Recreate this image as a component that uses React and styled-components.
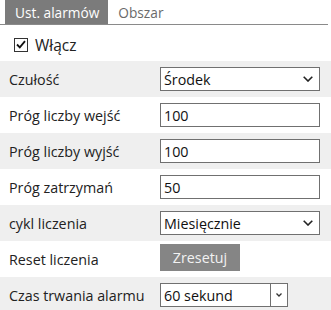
import React, { useState } from "react";
import styled, { createGlobalStyle } from "styled-components";

const GlobalStyle = createGlobalStyle`
  body {
    margin: 0;
    background: #ffffff;
    font-family: "Open Sans", "Noto Sans", sans-serif;
  }
`;

const Page = styled.div`
  width: 331px;
  height: 310px;
  overflow: hidden;
  color: #222222;
  font-size: 14.3px;
`;

const TabBar = styled.div`
  display: flex;
  width: 328px;
  height: 25px;
  padding-left: 5px;
  box-sizing: border-box;
  border-bottom: 1px solid #8a8a8a;
`;

const Tab = styled.div`
  display: flex;
  align-items: center;
  padding: 0 9px 0 10px;
  height: 24px;
  font-size: 13.7px;
  background: ${(p) => (p.$active ? "#7b7b7b" : "transparent")};
  color: ${(p) => (p.$active ? "#ffffff" : "#6a6a6a")};
`;

const Row = styled.div`
  display: grid;
  grid-template-columns: 160px 1fr;
  align-items: center;
  height: 36px;
  background: ${(p) => (p.$shaded ? "#efefef" : "#ffffff")};
`;

const Label = styled.div`
  padding-left: 9px;
  white-space: nowrap;
`;

const CheckRow = styled.label`
  display: flex;
  align-items: center;
  gap: 7px;
  height: 36px;
  padding: 3px 0 0 14px;
  box-sizing: border-box;
  font-size: 15.5px;
`;

const Box = styled.span`
  display: inline-flex;
  align-items: center;
  justify-content: center;
  width: 12px;
  height: 12px;
  border: 1px solid #333333;
  background: #ffffff;
`;

const TextInput = styled.input`
  width: 160px;
  height: 24px;
  box-sizing: border-box;
  border: 1px solid #707070;
  padding: 0 3px;
  font: inherit;
  font-size: 14.3px;
  color: #111111;
  background: #ffffff;
  outline: none;
`;

const SelectBox = styled.div`
  display: flex;
  align-items: center;
  width: ${(p) => p.$width}px;
  height: 24px;
  box-sizing: border-box;
  border: 1px solid #707070;
  background: #ffffff;
  color: #111111;
`;

const SelectValue = styled.span`
  flex: 1;
  padding-left: 3px;
  white-space: nowrap;
`;

const Arrow = styled.span`
  display: flex;
  align-items: center;
  justify-content: center;
  width: ${(p) => (p.$boxed ? 16 : 18)}px;
  height: 100%;
  border-left: ${(p) => (p.$boxed ? "1px solid #707070" : "none")};
  margin-right: ${(p) => (p.$boxed ? 0 : 2)}px;
`;

const ResetButton = styled.button`
  width: 80px;
  height: 27px;
  margin-top: -7px;
  border: none;
  background: #858585;
  color: #f2f2f2;
  font: inherit;
  font-size: 14.3px;
  padding: 0;
`;

function Chevron({ small }) {
  return small ? (
    <svg width="6" height="4" viewBox="0 0 6 4">
      <path d="M0.5 0.5 L3 3 L5.5 0.5" fill="none" stroke="#333" strokeWidth="1.3" />
    </svg>
  ) : (
    <svg width="10" height="6" viewBox="0 0 10 6">
      <path d="M0.7 0.7 L5 5 L9.3 0.7" fill="none" stroke="#222" strokeWidth="1.6" />
    </svg>
  );
}

function Select({ value, width = 160, small }) {
  return (
    <SelectBox $width={width}>
      <SelectValue>{value}</SelectValue>
      <Arrow $boxed={small}>
        <Chevron small={small} />
      </Arrow>
    </SelectBox>
  );
}

export default function App() {
  const [enabled] = useState(true);

  return (
    <Page>
      <GlobalStyle />
      <TabBar>
        <Tab $active>Ust. alarmów</Tab>
        <Tab>Obszar</Tab>
      </TabBar>

      <CheckRow>
        <Box>
          {enabled && (
            <svg width="10" height="9" viewBox="0 0 10 9">
              <path d="M1 4.5 L3.8 7.3 L9 1.2" fill="none" stroke="#111" strokeWidth="1.8" />
            </svg>
          )}
        </Box>
        Włącz
      </CheckRow>

      <Row $shaded>
        <Label>Czułość</Label>
        <Select value="Środek" />
      </Row>
      <Row>
        <Label>Próg liczby wejść</Label>
        <TextInput defaultValue="100" />
      </Row>
      <Row $shaded>
        <Label>Próg liczby wyjść</Label>
        <TextInput defaultValue="100" />
      </Row>
      <Row>
        <Label>Próg zatrzymań</Label>
        <TextInput defaultValue="50" />
      </Row>
      <Row $shaded>
        <Label>cykl liczenia</Label>
        <Select value="Miesięcznie" />
      </Row>
      <Row>
        <Label>Reset liczenia</Label>
        <div>
          <ResetButton>Zresetuj</ResetButton>
        </div>
      </Row>
      <Row $shaded>
        <Label>Czas trwania alarmu</Label>
        <Select value="60 sekund" width={128} small />
      </Row>
    </Page>
  );
}
